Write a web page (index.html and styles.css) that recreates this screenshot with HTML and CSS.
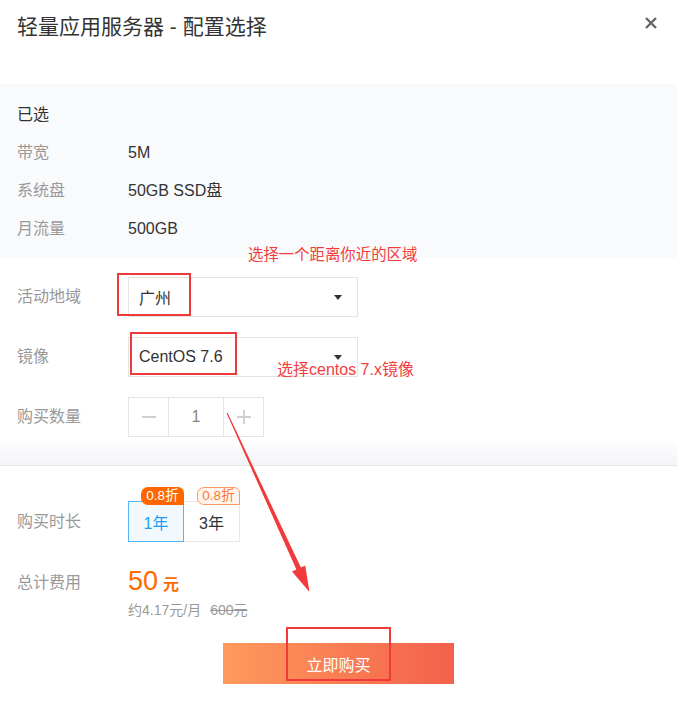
FILE: index.html
```html
<!DOCTYPE html>
<html lang="zh-CN">
<head>
<meta charset="utf-8">
<title>轻量应用服务器 - 配置选择</title>
<link rel="stylesheet" href="styles.css">
</head>
<body>
<div class="dialog">
  <div class="header">
    <h1 class="title">轻量应用服务器 - 配置选择</h1>
    <svg class="close" width="12" height="12" viewBox="0 0 12 12"><path d="M1 1 L11 11 M11 1 L1 11" stroke="#666" stroke-width="2.4" stroke-linecap="butt"/></svg>
  </div>

  <div class="summary">
    <div class="sum-title">已选</div>
    <div class="sum-row"><span class="sum-label">带宽</span><span class="sum-value">5M</span></div>
    <div class="sum-row"><span class="sum-label">系统盘</span><span class="sum-value">50GB SSD盘</span></div>
    <div class="sum-row"><span class="sum-label">月流量</span><span class="sum-value">500GB</span></div>
  </div>

  <div class="form">
    <div class="form-row">
      <span class="form-label">活动地域</span>
      <div class="select"><span>广州</span><i class="caret"></i></div>
    </div>
    <div class="form-row">
      <span class="form-label">镜像</span>
      <div class="select"><span>CentOS 7.6</span><i class="caret"></i></div>
    </div>
    <div class="form-row">
      <span class="form-label">购买数量</span>
      <div class="stepper">
        <div class="step-btn"><svg width="14" height="14" viewBox="0 0 14 14"><path d="M0 7 H14" stroke="#cfcfcf" stroke-width="2"/></svg></div>
        <div class="step-val">1</div>
        <div class="step-btn"><svg width="14" height="14" viewBox="0 0 14 14"><path d="M0 7 H14 M7 0 V14" stroke="#cfcfcf" stroke-width="2"/></svg></div>
      </div>
    </div>
  </div>

  <div class="purchase">
    <div class="form-row dur-row">
      <span class="form-label">购买时长</span>
      <div class="durations">
        <div class="dur dur-active">1年<span class="badge badge-fill">0.8折</span></div>
        <div class="dur">3年<span class="badge badge-line">0.8折</span></div>
      </div>
    </div>
    <div class="form-row price-row">
      <span class="form-label">总计费用</span>
      <div class="price"><span class="price-num">50</span><span class="price-unit">元</span></div>
    </div>
    <div class="price-sub"><span>约4.17元/月</span><span class="price-old">600元</span></div>
    <div class="buy-wrap"><button class="buy">立即购买</button></div>
  </div>

  <div class="mark mark-region"></div>
  <div class="mark mark-image"></div>
  <div class="mark mark-buy"></div>
  <span class="note note-region">选择一个距离你近的区域</span>
  <span class="note note-image">选择centos 7.x镜像</span>
  <svg class="arrow" width="677" height="706" viewBox="0 0 677 706">
    <polygon points="226.6,413.2 296.4,569.6 292.0,571.6 309.5,592 305.2,565.6 300.9,567.6 227.6,412.8" fill="#f23a3a"/>
  </svg>
</div>
</body>
</html>
```
FILE: styles.css
```css
* { box-sizing: border-box; }
html, body { margin: 0; padding: 0; background: #fff; }
body {
  font-family: "Liberation Sans", "Noto Sans CJK SC", sans-serif;
  color: #333;
  width: 677px;
  height: 706px;
  overflow: hidden;
}
.dialog { position: relative; width: 677px; height: 706px; }

.header {
  height: 84px;
  display: flex;
  align-items: flex-start;
  justify-content: space-between;
  padding: 13px 20px 0 17px;
}
.title {
  margin: 0;
  font-size: 21px;
  font-weight: normal;
  line-height: 28px;
  color: #333;
}
.close { margin-top: 4px; margin-right: 0; }

.summary {
  background: #f9fafc;
  height: 174px;
  padding: 20px 17px 0 17px;
  display: flex;
  flex-direction: column;
  gap: 16px;
}
.sum-title, .sum-row { font-size: 16px; line-height: 22px; }
.sum-title { color: #333; }
.sum-row { display: flex; }
.sum-label { width: 111px; color: #999; }
.sum-value { color: #333; }

.form {
  padding: 19px 17px 28px 17px;
  display: flex;
  flex-direction: column;
  gap: 20px;
  background: linear-gradient(to bottom, #fff 0, #fff calc(100% - 27px), #f3f4f7 100%);
  border-bottom: 1px solid #e6e7ea;
}
.form-row { display: flex; align-items: center; }
.form-label { width: 111px; font-size: 16px; color: #999; line-height: 22px; flex: none; }

.select {
  width: 230px;
  height: 40px;
  border: 1px solid #e3e3e3;
  display: flex;
  align-items: center;
  justify-content: space-between;
  padding: 0 15px 0 10px;
  font-size: 16px;
  color: #333;
}
.caret {
  display: block;
  width: 0; height: 0;
  border-left: 4.5px solid transparent;
  border-right: 4.5px solid transparent;
  border-top: 5px solid #333;
}

.stepper { display: flex; height: 40px; border: 1px solid #e6e6e6; }
.step-btn { width: 39px; display: flex; align-items: center; justify-content: center; }
.step-val {
  width: 56px;
  border-left: 1px solid #e6e6e6;
  border-right: 1px solid #e6e6e6;
  display: flex; align-items: center; justify-content: center;
  font-size: 16px; color: #888;
}

.purchase { padding: 35px 17px 0 17px; }
.durations { display: flex; }
.dur {
  position: relative;
  width: 56px;
  height: 41px;
  border: 1px solid #e6e6e6;
  display: flex; align-items: center; justify-content: center;
  font-size: 16px;
  color: #333;
}
.dur + .dur { border-left: none; }
.dur-active { border-color: #56b6f5; background: #f1f9ff; color: #1f9ef3; }
.badge {
  position: absolute;
  top: -15px;
  right: -1px;
  width: 43px;
  height: 18px;
  font-size: 13.5px;
  line-height: 18px;
  text-align: center;
  border-radius: 7px 6px 0 7px;
}
.badge-fill { background: #ff6600; color: #fff; }
.badge-line { background: #fff5ee; color: #ff7a2e; border: 1px solid #ff9b5c; line-height: 16px; height: 18px; top: -15px; }

.price-row { margin-top: 23px; }
.price { display: flex; align-items: baseline; line-height: 32px; color: #ff6a00; }
.price-num { font-size: 27px; }
.price-unit { font-size: 16px; font-weight: bold; margin-left: 5px; }
.price-sub { margin-left: 111px; margin-top: -1px; font-size: 14px; line-height: 20px; color: #999; display: flex; gap: 9px; }
.price-old { text-decoration: line-through; }

.buy-wrap { margin-top: 23px; padding-left: 206px; }
.buy {
  width: 231px;
  height: 41px;
  border: none;
  padding: 0;
  background: linear-gradient(to right, #ff9a5c, #f3614b);
  color: #fff;
  font-family: "Noto Sans CJK SC", sans-serif;
  font-size: 16px;
  display: block;
}

.mark { position: absolute; border: 2px solid #f03a3a; }
.mark-region { left: 117px; top: 273px; width: 74px; height: 43px; }
.mark-image { left: 130px; top: 332px; width: 107px; height: 43px; }
.mark-buy { left: 286px; top: 627px; width: 105px; height: 54px; }

.note { position: absolute; font-size: 16px; line-height: 20px; color: #f33c3c; white-space: nowrap; }
.note-region { left: 248px; top: 245px; font-size: 15.4px; }
.note-image { left: 277px; top: 360px; }

.arrow { position: absolute; left: 0; top: 0; pointer-events: none; }
```
